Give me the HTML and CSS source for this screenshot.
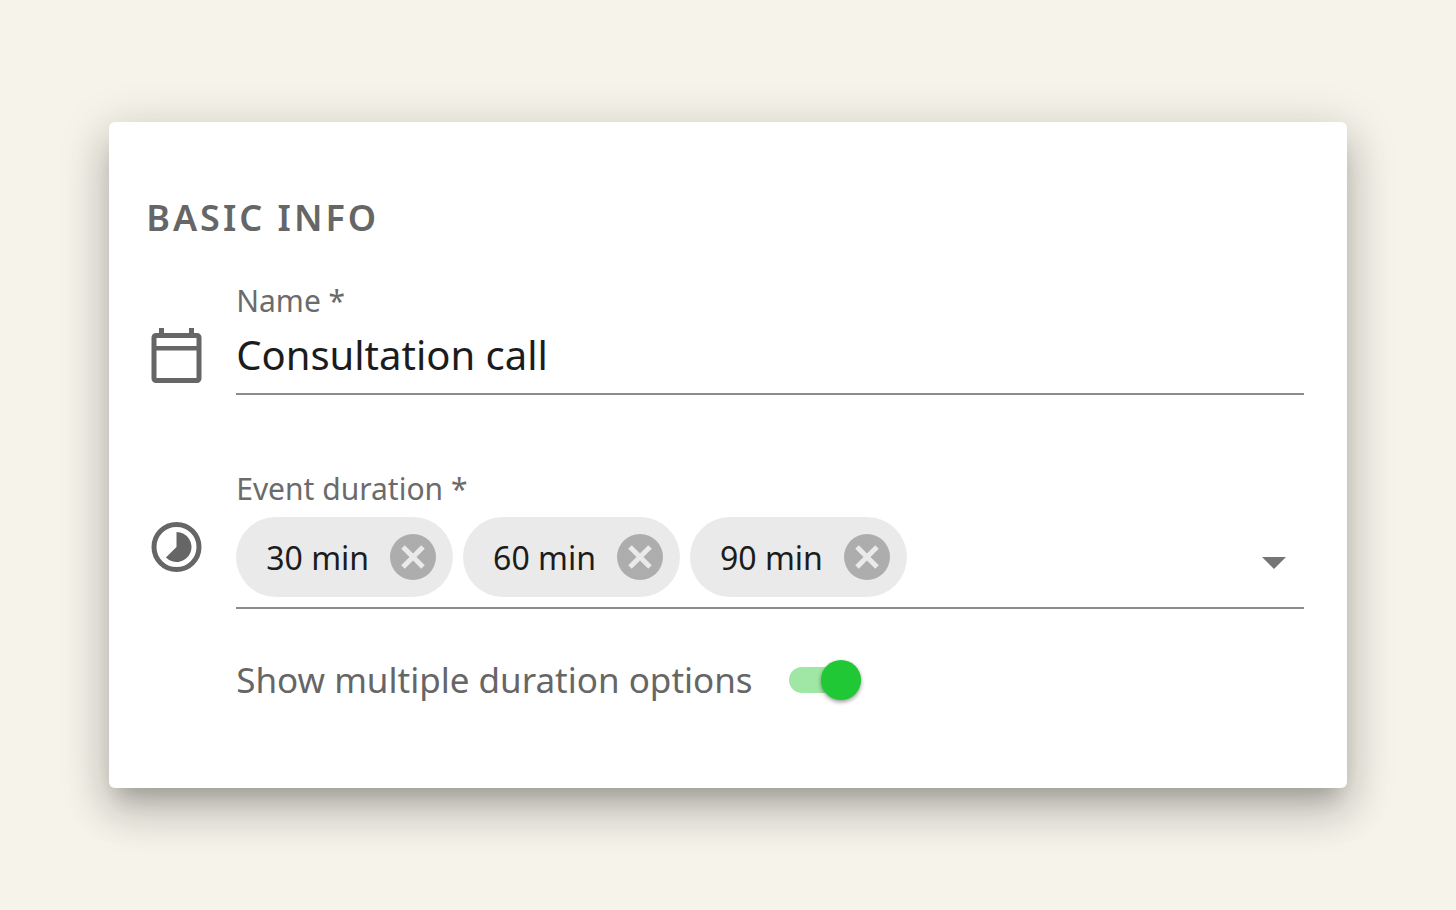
FILE: index.html
```html
<!DOCTYPE html>
<html lang="en">
  <head>
    <meta charset="UTF-8" />
    <meta name="viewport" content="width=device-width, initial-scale=1.0" />
    <title>Basic info</title>
    <link rel="stylesheet" href="styles.css">
  </head>
  <body>
    <form class="card">
      <h2 class="title">BASIC INFO</h2>

      <div class="row">
        <svg class="rowIcon" viewBox="0 0 52 56" aria-hidden="true">
          <rect x="4" y="7.5" width="45" height="45" rx="2" fill="none" stroke="currentColor" stroke-width="5" />
          <path d="M9 0h5v6H9zM39 0h5v6h-5zM4 18h45v4.500H4z" fill="currentColor" />
        </svg>
        <div class="field">
          <label class="label" for="name">Name *</label>
          <input class="textInput" id="name" type="text" value="Consultation call" required />
        </div>
      </div>

      <div class="row">
        <svg class="rowIcon" viewBox="0 0 52 56" aria-hidden="true">
          <circle cx="26.500" cy="31" r="22.500" fill="none" stroke="currentColor" stroke-width="5" />
          <path d="M26.500 31V16a15 15 0 1 1-10.600 25.600z" fill="currentColor" />
        </svg>
        <div class="field">
          <label class="label" for="duration">Event duration *</label>
          <div class="chips">
            <span class="chip">30 min
              <button class="remove" type="button" aria-label="Remove 30 min">
                <svg viewBox="0 0 46 46"><path d="M13 13l20 20M33 13L13 33" /></svg>
              </button>
            </span>
            <span class="chip">60 min
              <button class="remove" type="button" aria-label="Remove 60 min">
                <svg viewBox="0 0 46 46"><path d="M13 13l20 20M33 13L13 33" /></svg>
              </button>
            </span>
            <span class="chip">90 min
              <button class="remove" type="button" aria-label="Remove 90 min">
                <svg viewBox="0 0 46 46"><path d="M13 13l20 20M33 13L13 33" /></svg>
              </button>
            </span>
            <span class="picker">
              <select class="select" id="duration">
                <option value=""></option>
              </select>
              <svg class="arrow" viewBox="0 0 24 12" aria-hidden="true"><path d="M0 0h24L12 12z" /></svg>
            </span>
          </div>
        </div>
      </div>

      <div class="toggleRow">
        <label for="multiple">Show multiple duration options</label>
        <input class="toggle" id="multiple" type="checkbox" role="switch" checked />
      </div>
    </form>
  </body>
</html>
```
FILE: styles.css
```css
* {
  box-sizing: border-box;
}
body {
  margin: 0;
  min-height: 100vh;
  display: flex;
  align-items: center;
  justify-content: center;
  background: #f6f3eb;
  color: #1c1c1c;
  font-family: "Noto Sans", sans-serif;
}
.card {
  width: 85%;
  padding: 72px 43px 84px 37px;
  background: #fff;
  border-radius: 6px;
  box-shadow: 0 17px 20px -10px rgba(22, 22, 15, 0.2),
    0 26px 42px 3px rgba(22, 22, 15, 0.14),
    0 10px 48px 6px rgba(22, 22, 15, 0.14);
}
.title {
  margin: 0 0 37px;
  color: #666;
  font-size: 36px;
  font-weight: 600;
  line-height: 48px;
  letter-spacing: 3px;
}
.row {
  display: flex;
  align-items: flex-start;
  gap: 34px;
}
.row + .row {
  margin-top: 72px;
}
.rowIcon {
  flex: none;
  width: 52px;
  height: 56px;
  margin: 49px 0 0 4px;
  color: #666;
}
.field {
  flex: 1;
  min-width: 0;
  border-bottom: 2px solid #8c8c8c;
}
.label {
  display: block;
  color: #6b6b6b;
  font-size: 30px;
  line-height: 44px;
}
.textInput {
  display: block;
  width: 100%;
  height: 70px;
  padding: 0 0 8px;
  border: 0;
  outline: 0;
  background: none;
  color: inherit;
  font: 40px "Noto Sans", sans-serif;
}
.chips {
  display: flex;
  gap: 10px;
  padding: 6px 0 10px;
}
.chip {
  display: flex;
  align-items: center;
  gap: 21px;
  height: 80px;
  padding: 0 17px 0 30px;
  border-radius: 40px;
  background: #eaeaea;
  font-size: 32px;
  white-space: nowrap;
}
.remove {
  width: 46px;
  height: 46px;
  padding: 0;
  border: 0;
  border-radius: 50%;
  background: #adadad;
  cursor: pointer;
}
.remove svg {
  display: block;
  fill: none;
  stroke: #eaeaea;
  stroke-width: 5;
}
/* select and its arrow share one grid cell */
.picker {
  flex: 1;
  display: grid;
  align-items: center;
}
.select {
  grid-area: 1 / 1;
  width: 100%;
  height: 80px;
  border: 0;
  outline: 0;
  background: none;
  appearance: none;
}
.arrow {
  grid-area: 1 / 1;
  justify-self: end;
  width: 24px;
  margin: 12px 18px 0 0;
  fill: #757575;
  pointer-events: none;
}
.toggleRow {
  display: flex;
  align-items: center;
  gap: 36px;
  margin-top: 47px;
  padding-left: 90px;
  color: #666;
  font-size: 35px;
  line-height: 48px;
}
.toggle {
  appearance: none;
  display: flex;
  align-items: center;
  justify-content: flex-end;
  width: 72px;
  height: 26px;
  margin: 0;
  border-radius: 13px;
  background: #a0e6a4;
  cursor: pointer;
}
.toggle::before {
  content: "";
  width: 40px;
  height: 40px;
  border-radius: 50%;
  background: #1fc834;
  box-shadow: 0 2px 4px rgba(0, 0, 0, 0.4);
}
.toggle:not(:checked) {
  justify-content: flex-start;
}
```
